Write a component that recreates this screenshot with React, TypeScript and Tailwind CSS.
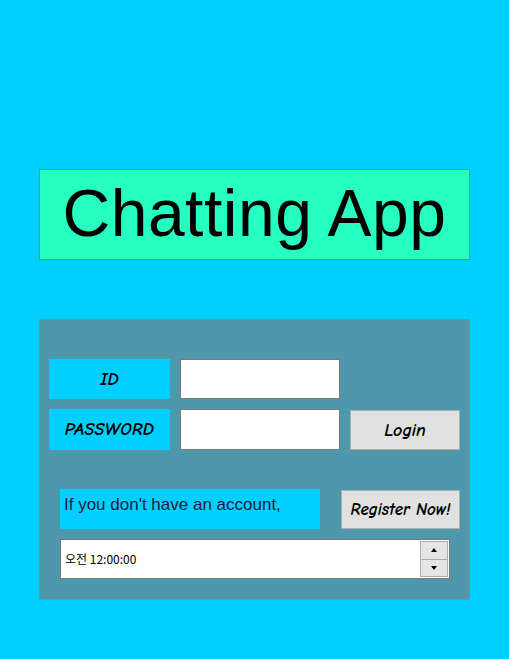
export default function App() {
  const comic = { fontFamily: '"Comic Neue", "DejaVu Sans", sans-serif' }
  return (
    <div className="w-[509px] h-[659px] bg-[#00cfff] pt-[169px] pl-[39px] flex flex-col gap-[59px] overflow-hidden">
      <div className="w-[431px] h-[91px] bg-[#26ffbf] border border-[#4f9a93] flex items-center justify-center">
        <span className="text-[66px] leading-none text-black pb-[4px] tracking-[0.5px]" style={{ fontFamily: '"Liberation Sans", sans-serif', fontWeight: 400 }}>
          Chatting App
        </span>
      </div>

      <div className="w-[431px] h-[281px] bg-[#4f97ab] border border-[#5a9db0] pt-[39px] pl-[9px] flex flex-col" style={comic}>
        <div className="flex gap-[10px] h-[40px]">
          <div className="w-[121px] h-[40px] bg-[#00cfff] flex items-center justify-center italic font-bold text-[18px] text-black">ID</div>
          <div className="w-[160px] h-[40px] bg-white border border-[#7a7a7a]" />
        </div>
        <div className="flex gap-[10px] mt-[10px] h-[41px]">
          <div className="w-[121px] h-[41px] bg-[#00cfff] flex items-center justify-center italic font-bold text-[18px] text-black tracking-[0.3px]">PASSWORD</div>
          <div className="w-[160px] h-[41px] bg-white border border-[#7a7a7a]" />
          <button className="w-[110px] h-[40px] mt-[1px] bg-[#e1e1e1] border border-[#adadad] italic font-bold text-[18px] text-black">Login</button>
        </div>

        <div className="flex gap-[21px] mt-[39px] pl-[11px] h-[40px]">
          <div
            className="w-[260px] h-[40px] bg-[#00cfff] px-[4px] pt-[3px] text-[17px] text-[#1c1c3c]"
            style={{ fontFamily: '"Liberation Sans", "Noto Sans CJK KR", sans-serif' }}
          >
            If you don't have an account,
          </div>
          <button className="w-[119px] h-[39px] mt-[1px] bg-[#e1e1e1] border border-[#adadad] italic font-bold text-[17px] text-black whitespace-nowrap">Register Now!</button>
        </div>

        <div className="ml-[11px] mt-[10px] w-[390px] h-[40px] bg-white border border-[#7a7a7a] flex items-center justify-between pl-[4px] pr-[1px]">
          <span className="text-[12px] text-black" style={{ fontFamily: '"Noto Sans CJK KR", "Liberation Sans", sans-serif' }}>
            오전 12:00:00
          </span>
          <div className="flex flex-col w-[28px] h-[36px] border border-[#adadad]">
            <div className="flex-1 bg-[#e5e5e5] border-b border-[#adadad] flex items-center justify-center">
              <svg width="6" height="4" viewBox="0 0 6 4"><path d="M0 4 L3 0 L6 4Z" fill="#000" /></svg>
            </div>
            <div className="flex-1 bg-[#e5e5e5] flex items-center justify-center">
              <svg width="6" height="4" viewBox="0 0 6 4"><path d="M0 0 L3 4 L6 0Z" fill="#000" /></svg>
            </div>
          </div>
        </div>
      </div>
    </div>
  )
}
